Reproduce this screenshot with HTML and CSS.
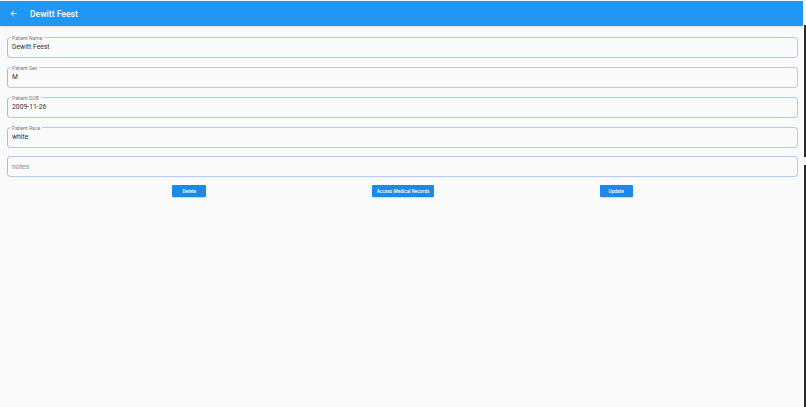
FILE: index.html
```html
<!DOCTYPE html>
<html lang="en">
<head>
<meta charset="utf-8">
<title>Dewitt Feest</title>
<link rel="stylesheet" href="styles.css">
</head>
<body>
<div class="page">
  <div class="main">
    <header class="appbar">
      <button class="back" aria-label="Back">
        <svg viewBox="0 0 24 24" width="9" height="9"><path fill="#fff" d="M20 11H7.83l5.59-5.59L12 4l-8 8 8 8 1.41-1.41L7.83 13H20v-2z"/></svg>
      </button>
      <h1 class="title">Dewitt Feest</h1>
    </header>
    <form class="form">
      <div class="field">
        <span class="label">Patient Name</span>
        <span class="value">Dewitt Feest</span>
      </div>
      <div class="field">
        <span class="label">Patient Sex</span>
        <span class="value">M</span>
      </div>
      <div class="field">
        <span class="label">Patient DOB</span>
        <span class="value">2009-11-26</span>
      </div>
      <div class="field">
        <span class="label">Patient Race</span>
        <span class="value">white</span>
      </div>
      <div class="field notes">
        <span class="placeholder">notes</span>
      </div>
      <div class="actions">
        <button type="button" class="btn">Delete</button>
        <button type="button" class="btn">Access Medical Records</button>
        <button type="button" class="btn">Update</button>
      </div>
    </form>
  </div>
  <div class="edge">
    <div class="edge-top"></div>
    <div class="edge-dark first"></div>
    <div class="edge-gap"></div>
    <div class="edge-dark rest"></div>
  </div>
</div>
</body>
</html>
```
FILE: styles.css
```css
* { box-sizing: border-box; }
html, body { margin: 0; padding: 0; height: 100%; }
body {
  background: #fafafa;
  font-family: Roboto, "Noto Sans", "Liberation Sans", sans-serif;
  color: #333;
}
.page {
  display: flex;
  height: 407px;
  width: 806px;
}
.main {
  flex: 1;
  display: flex;
  flex-direction: column;
  padding-right: 1px;
}
.appbar {
  height: 25px;
  margin-top: 1px;
  background: #2196f3;
  display: flex;
  align-items: center;
  box-shadow: 0 1px 2px rgba(0,0,0,0.12);
}
.back {
  width: 23px;
  height: 24px;
  border: 0;
  padding: 0 0 0 3px;
  background: transparent;
  display: flex;
  align-items: center;
  justify-content: center;
}
.back svg { display: block; }
.title {
  margin: 0 0 0 7px;
  font-size: 8.6px;
  font-weight: 500;
  color: #fff;
}
.form {
  display: flex;
  flex-direction: column;
  gap: 9px;
  padding: 11px 5px 0 7px;
}
.field {
  position: relative;
  height: 21px;
  border: 1px solid #b3cbf1;
  border-left-color: #9fbcec;
  border-radius: 4px;
  display: flex;
  align-items: center;
  padding: 0 4px 1px 4px;
}
.label {
  position: absolute;
  top: -3px;
  left: 3px;
  padding: 0 2px 0 1px;
  background: #fafafa;
  font-size: 5px;
  line-height: 6px;
  color: #7a7a7a;
}
.value {
  font-size: 6.8px;
  color: #333;
}
.notes { margin-top: -1px; padding-bottom: 0; }
.placeholder {
  font-size: 6.8px;
  color: #8a8a8a;
}
.actions {
  display: flex;
  justify-content: space-evenly;
  margin-top: -1px;
}
.btn {
  height: 12px;
  border: 0;
  border-radius: 1px;
  background: #1e88e5;
  color: #fff;
  font-family: Roboto, "Noto Sans", "Liberation Sans", sans-serif;
  font-size: 4.8px;
  font-weight: 500;
  padding: 0 5px;
  box-shadow: 0 1px 1px rgba(0,0,0,0.15);
}
.btn:first-child { width: 34px; }
.btn:last-child { width: 33px; }
.edge {
  width: 2px;
  display: flex;
  flex-direction: column;
}
.edge-top { height: 25px; background: #f5f5f5; }
.edge-dark { background: #2b2b2b; }
.edge-dark.first { height: 132px; }
.edge-gap { height: 8px; background: #f5f5f5; }
.edge-dark.rest { flex: 1; }
```
